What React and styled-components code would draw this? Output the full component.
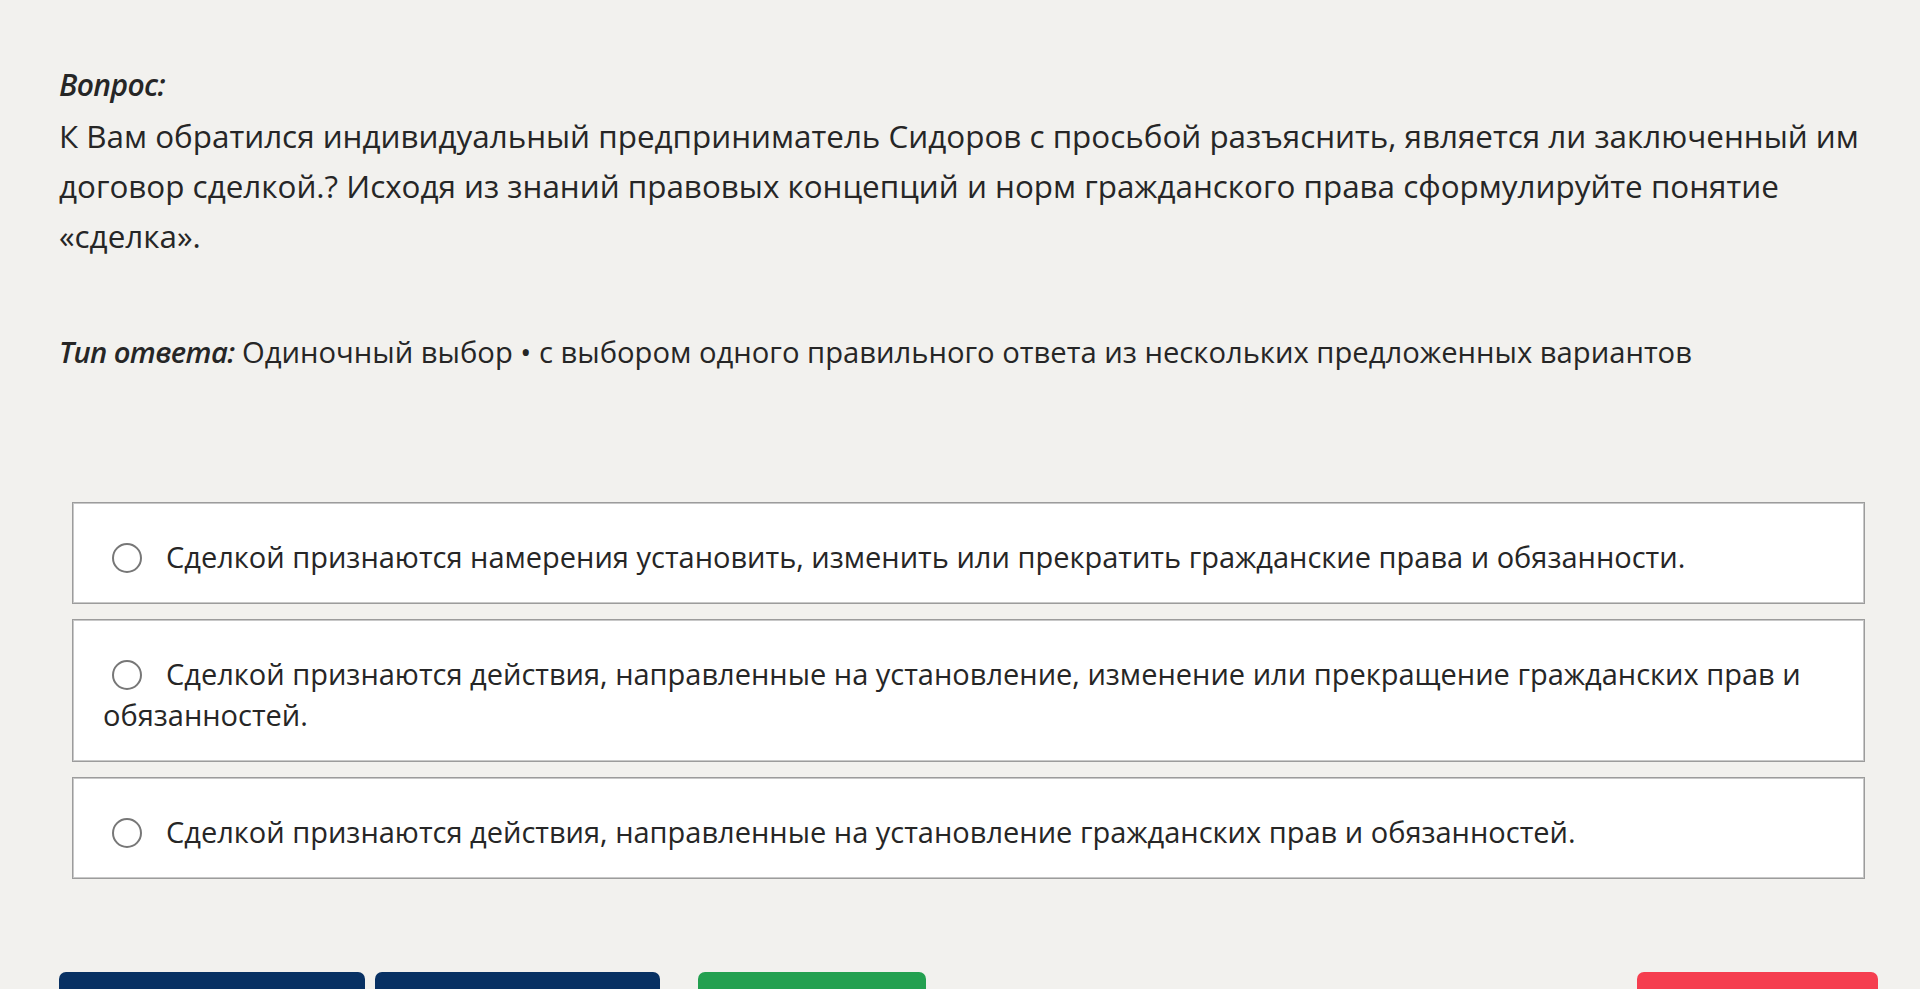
import React from "react";
import styled, { createGlobalStyle } from "styled-components";

const GlobalStyle = createGlobalStyle`
  html {
    overflow: hidden;
  }
  body {
    margin: 0;
    background: #f2f1ee;
    font-family: "Open Sans", "Noto Sans", sans-serif;
    color: #262626;
  }
`;

const Page = styled.div`
  padding: 60px 42px 40px 59px;
`;

const Label = styled.div`
  font-size: 30px;
  line-height: 50px;
  font-weight: 600;
  font-style: italic;
  letter-spacing: -0.6px;
  margin-bottom: 1px;
`;

const QuestionText = styled.p`
  margin: 0;
  font-size: 31.4px;
  line-height: 50px;
`;

const AnswerType = styled.p`
  margin: 71px 0 0;
  font-size: 29.2px;
  line-height: 40px;

  b {
    font-weight: 600;
    font-style: italic;
    letter-spacing: -0.6px;
  }
`;

const Options = styled.div`
  display: flex;
  flex-direction: column;
  gap: 15px;
  margin: 130px 13px 0;
`;

const Option = styled.label`
  display: block;
  background: #fff;
  border: 1px solid #9c9c9c;
  box-shadow: inset 0 0 0 1px #c8c8c8;
  padding: 33px 30px 26px;
  font-size: 29px;
  line-height: 41px;
  cursor: pointer;
`;

const Radio = styled.span`
  display: inline-block;
  box-sizing: border-box;
  width: 30px;
  height: 30px;
  border: 2px solid #777;
  border-radius: 50%;
  vertical-align: -5px;
  margin: 0 24px 0 9px;
`;

const Buttons = styled.div`
  display: flex;
  align-items: flex-start;
  margin-top: 93px;
`;

const Button = styled.button`
  width: ${(p) => p.$w}px;
  height: 56px;
  margin-left: ${(p) => p.$ml || 0}px;
  padding: 0;
  border: none;
  border-radius: 7px;
  background: ${(p) => p.$bg};
`;

const Spacer = styled.div`
  flex: 1;
`;

const options = [
  "Сделкой признаются намерения установить, изменить или прекратить гражданские права и обязанности.",
  "Сделкой признаются действия, направленные на установление, изменение или прекращение гражданских прав и обязанностей.",
  "Сделкой признаются действия, направленные на установление гражданских прав и обязанностей.",
];

export default function App() {
  return (
    <Page>
      <GlobalStyle />
      <Label>Вопрос:</Label>
      <QuestionText>
        К Вам обратился индивидуальный предприниматель Сидоров с просьбой разъяснить, является ли заключенный им договор сделкой.? Исходя из знаний правовых концепций и норм гражданского права сформулируйте понятие «сделка».
      </QuestionText>
      <AnswerType>
        <b>Тип ответа:</b> Одиночный выбор • с выбором одного правильного ответа из нескольких предложенных вариантов
      </AnswerType>
      <Options>
        {options.map((text) => (
          <Option key={text}>
            <Radio />
            {text}
          </Option>
        ))}
      </Options>
      <Buttons>
        <Button $w={306} $bg="#083163" aria-label="Назад" />
        <Button $w={285} $ml={10} $bg="#083163" aria-label="Далее" />
        <Button $w={228} $ml={38} $bg="#23a050" aria-label="Ответить" />
        <Spacer />
        <Button $w={241} $bg="#f53e4f" aria-label="Завершить" />
      </Buttons>
    </Page>
  );
}
